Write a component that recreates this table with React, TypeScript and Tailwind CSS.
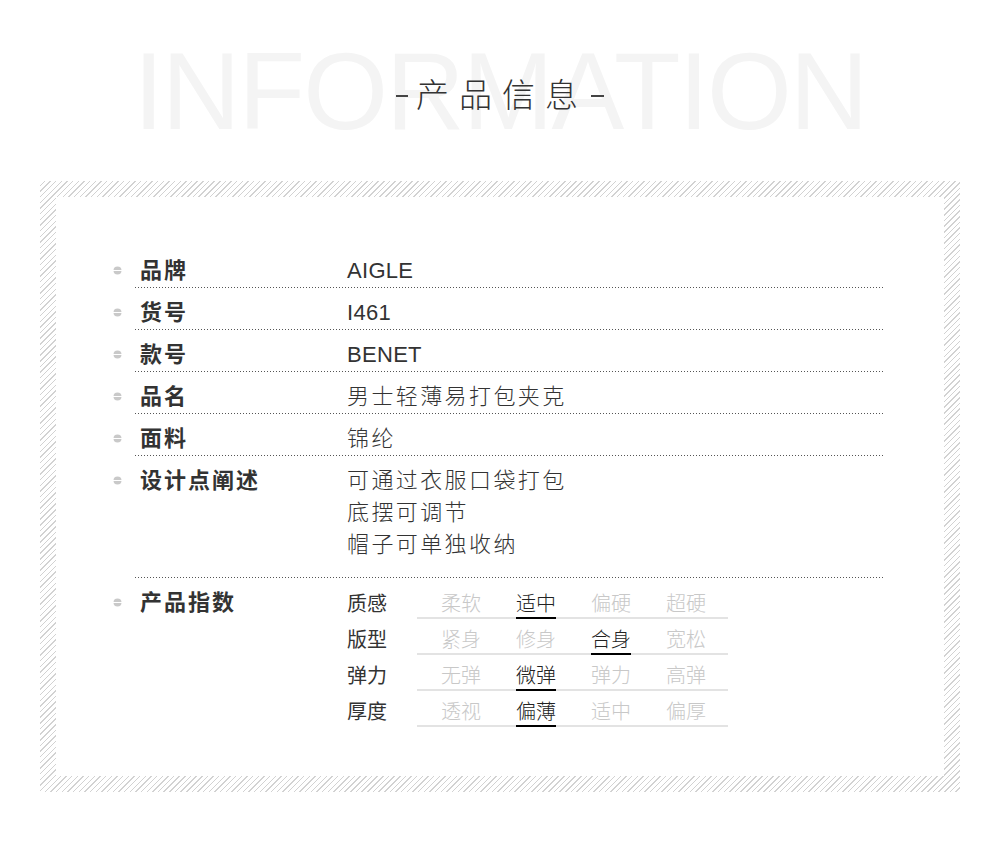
import React from "react";

const FONT = "font-['Liberation_Sans','Noto_Sans_CJK_SC',sans-serif]";

function Bullet() {
  return (
    <svg width="9" height="9" viewBox="0 0 9 9" className="absolute left-[-22px] top-[20px]">
      <circle cx="4.5" cy="4.5" r="4" fill="#c9c9c9" />
      <rect x="0" y="4" width="9" height="1" fill="#ffffff" />
    </svg>
  );
}

function Dots() {
  return <div className="h-px w-full bg-[repeating-linear-gradient(to_right,#555_0px,#555_1px,transparent_1px,transparent_3px)]" />;
}

function Row({ label, children, pb = "pb-0", latin = false }: { label: string; children: React.ReactNode; pb?: string; latin?: boolean }) {
  return (
    <div className="relative">
      <Bullet />
      <div className={`flex pt-[9px] ${pb}`}>
        <div className="w-[212px] pl-[5px] text-[22px] leading-[32px] font-bold tracking-[2px] text-[#333]">{label}</div>
        <div className={`flex-1 text-[22px] leading-[32px] text-[#333] font-light ${latin ? "tracking-[0.3px]" : "tracking-[2.4px]"}`}>{children}</div>
      </div>
    </div>
  );
}

const indices: { name: string; opts: string[]; sel: number }[] = [
  { name: "质感", opts: ["柔软", "适中", "偏硬", "超硬"], sel: 1 },
  { name: "版型", opts: ["紧身", "修身", "合身", "宽松"], sel: 2 },
  { name: "弹力", opts: ["无弹", "微弹", "弹力", "高弹"], sel: 1 },
  { name: "厚度", opts: ["透视", "偏薄", "适中", "偏厚"], sel: 1 },
];

export default function App() {
  return (
    <div className={`w-[1000px] h-[842px] bg-white ${FONT} overflow-hidden`}>
      <div className="relative h-[181px]">
        <div className="absolute left-0 right-0 top-[26px] text-center text-[109px] leading-[130px] tracking-[-2px] text-[#f4f4f4] select-none">
          INFORMATION
        </div>
        <div className="absolute left-0 right-0 top-[68px] flex items-center justify-center text-[#333]">
          <span className="w-[12px] h-[2px] bg-[#444] mt-[6px] mr-[8px]" />
          <span className="text-[33px] leading-[50px] font-light tracking-[10px] mr-[3px] font-['Noto_Sans_CJK_SC',sans-serif]">产品信息</span>
          <span className="w-[13px] h-[2px] bg-[#444] mt-[6px]" />
        </div>
      </div>
      <div className="mx-[40px] w-[920px] h-[611px] p-[16px] bg-[repeating-linear-gradient(135deg,#ffffff_0px,#ffffff_3px,#d2d2d2_3px,#d2d2d2_4px)]">
        <div className="bg-white w-full h-full pt-[49px] pl-[79px]">
          <div className="w-[748px]">
            <Row label="品牌" latin>AIGLE</Row>
            <Dots />
            <Row label="货号" latin>I461</Row>
            <Dots />
            <Row label="款号" latin>BENET</Row>
            <Dots />
            <Row label="品名">男士轻薄易打包夹克</Row>
            <Dots />
            <Row label="面料">锦纶</Row>
            <Dots />
            <Row label="设计点阐述" pb="pb-[16px]">
              <div>可通过衣服口袋打包</div>
              <div>底摆可调节</div>
              <div>帽子可单独收纳</div>
            </Row>
            <Dots />
            <div className="relative">
              <Bullet />
              <div className="flex pt-[9px]">
                <div className="w-[212px] pl-[5px] text-[22px] leading-[32px] font-bold tracking-[2px] text-[#333]">产品指数</div>
                <div className="flex flex-col">
                  {indices.map((r) => (
                    <div key={r.name} className="flex items-start pt-[4px] pb-[4px]">
                      <div className="w-[70px] text-[20px] leading-[26px] text-[#333]">{r.name}</div>
                      <div className="flex flex-col">
                        <div className="flex pl-[24px] pr-[22px] gap-[35px] h-[26px]">
                          {r.opts.map((o, i) => (
                            <div key={o + i} className="relative w-[40px] text-[20px] leading-[26px] font-light">
                              <span className={i === r.sel ? "text-[#222]" : "text-[#c8c8c8]"}>{o}</span>
                              {i === r.sel && <div className="absolute left-0 right-0 top-[26px] h-[2px] bg-black" />}
                            </div>
                          ))}
                        </div>
                        <div className="h-[2px] w-[311px] bg-[#e3e3e3]" />
                      </div>
                    </div>
                  ))}
                </div>
              </div>
            </div>
          </div>
        </div>
      </div>
    </div>
  );
}
